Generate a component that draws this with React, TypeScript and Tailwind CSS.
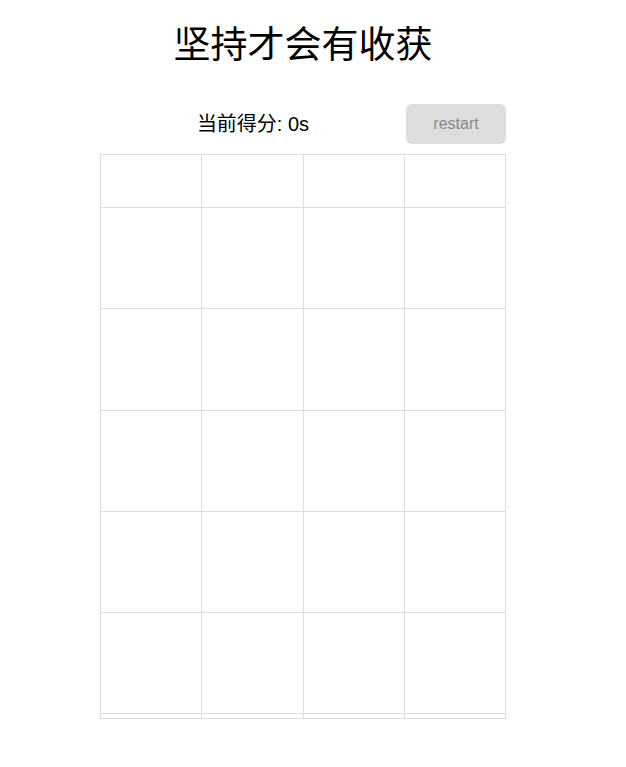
const ROWS = [52, 100, 101, 100, 100, 100, 4];

export default function App() {
  return (
    <div
      className="min-h-[767px] w-[606px] bg-white pt-[19px]"
      style={{ fontFamily: '"Liberation Sans", "Noto Sans CJK SC", sans-serif' }}
    >
      <h1 className="text-center text-[37px] leading-[54px] text-black">坚持才会有收获</h1>

      <div className="mx-auto mt-[31px] flex w-[406px] items-center">
        <div className="flex-1 text-center text-[20px] text-black">当前得分: 0s</div>
        <button className="h-10 w-[100px] rounded-md bg-[#dddddd] text-[16px] text-[#888888]">
          restart
        </button>
      </div>

      <div className="mx-auto mt-[10px] w-[406px] border border-[#dddddd]">
        {ROWS.map((h, i) => (
          <div
            key={i}
            className={`grid grid-cols-[101px_102px_101px_100px] ${i < ROWS.length - 1 ? 'border-b border-[#dddddd]' : ''}`}
          >
            {[0, 1, 2, 3].map((j) => (
              <div
                key={j}
                className={j < 3 ? 'border-r border-[#dddddd]' : ''}
                style={{ height: h }}
              />
            ))}
          </div>
        ))}
      </div>
    </div>
  );
}
